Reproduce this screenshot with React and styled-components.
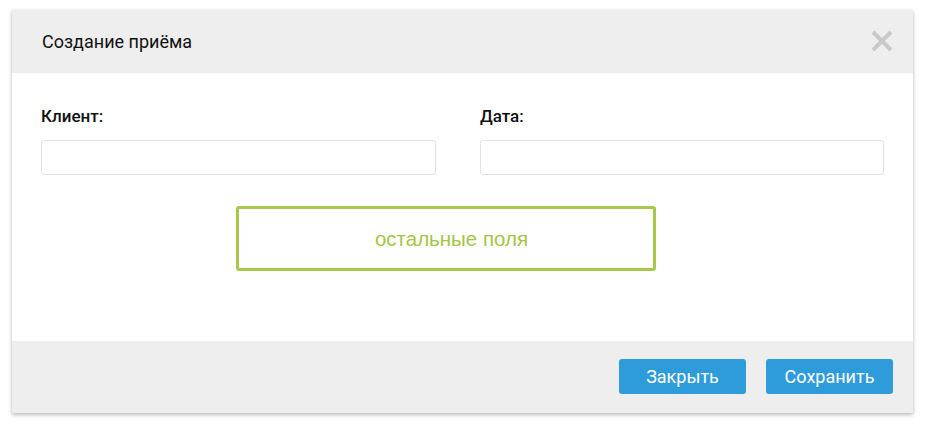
import React from 'react';
import styled, { createGlobalStyle } from 'styled-components';

const GlobalStyle = createGlobalStyle`
  html, body {
    margin: 0;
    padding: 0;
    background: #ffffff;
  }
  body {
    font-family: Roboto, "Liberation Sans", sans-serif;
  }
`;

const Page = styled.div`
  padding: 10px 13px 18px 12px;
`;

const Modal = styled.div`
  width: 901px;
  background: #ffffff;
  box-shadow: 0 2px 4px rgba(0, 0, 0, 0.25), 0 0 2px rgba(0, 0, 0, 0.08);
  display: flex;
  flex-flow: column;
`;

const Header = styled.div`
  height: 63px;
  background: #eeeeee;
  display: flex;
  align-items: center;
  justify-content: space-between;
  padding: 0 20px 1px 30px;
  box-sizing: border-box;

  & h2 {
    margin: 0;
    font-size: 18px;
    font-weight: 400;
    color: #111111;
  }
`;

const CloseBtn = styled.button`
  background: none;
  border: none;
  padding: 0;
  width: 22px;
  height: 22px;
  cursor: pointer;
  display: flex;
`;

const Body = styled.div`
  height: 268px;
  box-sizing: border-box;
  padding: 33px 29px 0 29px;
  display: flex;
  flex-flow: column;
`;

const Fields = styled.div`
  width: 100%;
  display: grid;
  grid-template-columns: 395px 1fr;
  column-gap: 44px;
`;

const Field = styled.div`
  display: flex;
  flex-flow: column;

  & label {
    font-size: 17px;
    font-weight: 500;
    color: #111111;
    line-height: 20px;
    margin-bottom: 14px;
  }

  & input {
    height: 35px;
    box-sizing: border-box;
    border: 1px solid #e2e2e2;
    border-radius: 3px;
    background: #ffffff;
    outline: none;
    padding: 0 10px;
    font-size: 15px;
  }
`;

const OtherFields = styled.div`
  margin: 31px 0 0 195px;
  width: 420px;
  height: 65px;
  box-sizing: border-box;
  border: 3px solid #a6c94b;
  border-radius: 3px;
  display: flex;
  align-items: center;
  justify-content: center;
  padding-left: 11px;
  font-family: "Liberation Sans", Arial, sans-serif;
  font-size: 20.5px;
  color: #a3c645;
`;

const Footer = styled.div`
  height: 72px;
  background: #eeeeee;
  display: flex;
  align-items: center;
  justify-content: flex-end;
  gap: 20px;
  padding: 0 20px 1px 0;
  box-sizing: border-box;
`;

const Button = styled.button`
  width: 127px;
  height: 35px;
  border: none;
  border-radius: 3px;
  background: #2e9cdb;
  color: #ffffff;
  font-family: Roboto, sans-serif;
  font-size: 18px;
  cursor: pointer;
`;

function CloseIcon() {
  return (
    <svg width="22" height="22" viewBox="0 0 22 22">
      <path d="M2 2 L20 20 M20 2 L2 20" stroke="#c9c9c9" strokeWidth="4" fill="none" />
    </svg>
  );
}

function App() {
  return (
    <Page>
      <GlobalStyle />
      <Modal>
        <Header>
          <h2>Создание приёма</h2>
          <CloseBtn aria-label="close">
            <CloseIcon />
          </CloseBtn>
        </Header>
        <Body>
          <Fields>
            <Field>
              <label>Клиент:</label>
              <input type="text" />
            </Field>
            <Field>
              <label>Дата:</label>
              <input type="text" />
            </Field>
          </Fields>
          <OtherFields>остальные поля</OtherFields>
        </Body>
        <Footer>
          <Button>Закрыть</Button>
          <Button>Сохранить</Button>
        </Footer>
      </Modal>
    </Page>
  );
}

export default App;
